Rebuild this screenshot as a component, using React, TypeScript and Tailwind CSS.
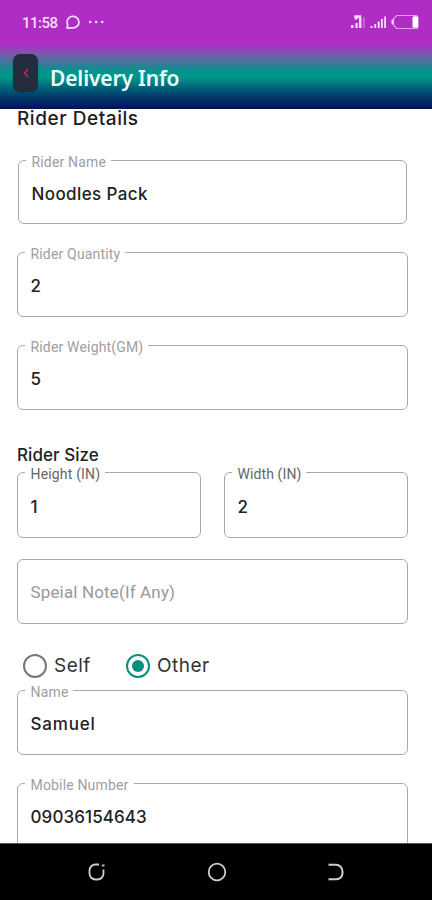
import React from 'react'

type FieldProps = {
  label?: string
  value?: string
  placeholder?: string
  className?: string
  labelClass?: string
  valueClass?: string
}

function Field({ label, value, placeholder, className = '', labelClass = 'tracking-[0.17px] text-[#a0a0a0]', valueClass = '' }: FieldProps) {
  return (
    <div className={`relative flex items-center rounded-[6px] border border-[#a9a9a9] ${className}`}>
      {label && (
        <span
          className={`absolute -top-[7px] left-[7px] whitespace-nowrap bg-white pl-[5.5px] pr-[5px] font-[Roboto,sans-serif] text-sm leading-4 ${labelClass}`}
        >
          {label}
        </span>
      )}
      {value && (
        <span className={`whitespace-nowrap pl-[12.5px] pt-[3px] text-[17px] leading-6 text-[#222] ${valueClass || 'font-medium'}`}>{value}</span>
      )}
      {placeholder && (
        <span className="whitespace-nowrap pl-[12.5px] pt-px font-[Roboto,sans-serif] text-[17px] leading-6 tracking-[0.15px] text-[#999]">
          {placeholder}
        </span>
      )}
    </div>
  )
}

function StatusBar() {
  return (
    <div className="flex h-11 items-center justify-between pl-[22px] pr-[13px] text-[#f6dcfa]">
      <div className="flex items-center">
        <span className="mt-0.5 w-[43px] font-[Roboto,sans-serif] text-[15px] font-medium leading-5 tracking-[-0.5px]">11:58</span>
        <svg width="15" height="14" viewBox="0 0 15 14" fill="none" stroke="currentColor" strokeWidth="1.7">
          <path d="M2 12.900H8a5.900 5.800 0 1 0-5.300-3.300Z" />
        </svg>
        <svg className="ml-2" width="18" height="4" viewBox="0 0 18 4" fill="currentColor">
          <circle cx="2.200" cy="2" r="1.300" />
          <circle cx="8.200" cy="2" r="1.300" />
          <circle cx="14.200" cy="2" r="1.300" />
        </svg>
      </div>
      <svg width="69" height="16" viewBox="0 0 69 16" fill="currentColor">
        <path d="M1 11h2.500v3H1zM5.500 9h2.200v5H5.500zM9 4h2.500v10H9z" />
        <path d="M4.200 4V1.300h7V4H7.500v1.500H4.700V4z" />
        <path d="M13.200 3h1.500v11h-1.500z" opacity=".4" />
        <path d="M20.500 12h2v2h-2zM24.300 10h1.800v4h-1.800zM27.700 7.500h2v6.500h-2zM31 5h1.800v9H31zM34.200 2.500h1.800v11.500h-1.800z" />
        <path d="M46.500 1.500H66a2 2 0 0 1 2 2v9a2 2 0 0 1-2 2H46.500l-3-3.500V5z" fill="none" stroke="currentColor" strokeWidth="1.200" opacity=".65" />
        <rect x="41.500" y="5.500" width="2.200" height="5" rx="1" />
        <rect x="62.500" y="2.200" width="5.500" height="11.500" rx="1.500" fill="#fff" />
      </svg>
    </div>
  )
}

function Radio({ label, checked }: { label: string; checked?: boolean }) {
  return (
    <div className="flex items-center gap-[7px]">
      <span
        className={`flex h-6 w-6 items-center justify-center rounded-full border-2 ${checked ? 'border-[#079080]' : 'border-[#777]'}`}
      >
        {checked && <span className="h-3 w-3 rounded-full bg-[#079080]" />}
      </span>
      <span className="pt-px text-[19px] leading-6 tracking-[0.5px] text-[#333]">{label}</span>
    </div>
  )
}

export default function App() {
  return (
    <div className="flex h-[900px] w-[432px] flex-col overflow-hidden bg-white font-[Inter,sans-serif]">
      <header className="h-[109px] shrink-0 bg-[linear-gradient(180deg,#af2dc4_0px,#af2dc4_45px,#785bad_54px,#00958a_72px,#00958a_78px,#006b7c_86px,#023b6b_97px,#04185d_107px,#04104c_109px)]">
        <StatusBar />
        <div className="flex pl-[13px] pt-[10px]">
          <button className="flex h-[38px] w-[25px] items-center justify-center rounded-[7px] bg-[#252c3d] shadow-sm">
            <svg width="6" height="10" viewBox="0 0 6 10" fill="none" stroke="#d5205b" strokeWidth="1.5">
              <path d="M5 1.200 1.500 5 5 8.800" />
            </svg>
          </button>
          <h1 className="ml-3 mt-[9px] font-['Noto_Sans',sans-serif] text-[21px] font-semibold leading-[30px] tracking-[-0.15px] text-[#e9fffc]">
            Delivery Info
          </h1>
        </div>
      </header>

      <main className="min-h-0 flex-1 pl-[17px] pr-6">
        <h2 className="mb-8 h-[19px] whitespace-nowrap text-[19px] font-medium leading-[19px] tracking-[0.55px] text-[#202020]">
          Rider Details
        </h2>
        <Field label="Rider Name" value="Noodles Pack" className="mb-7 ml-px mr-px h-16" valueClass="font-medium tracking-[0.4px]" />
        <Field label="Rider Quantity" value="2" className="mb-7 h-[65px]" />
        <Field label="Rider Weight(GM)" value="5" className="h-[65px]" />

        <h3 className="mb-[7px] mt-[35px] h-5 whitespace-nowrap text-[17px] font-medium leading-5 tracking-[0.05px] text-[#222]">
          Rider Size
        </h3>
        <div className="mb-[21px] flex justify-between">
          <Field label="Height (IN)" value="1" className="h-[66px] w-[184px]" labelClass="tracking-[0.17px] text-[#666]" />
          <Field label="Width (IN)" value="2" className="h-[66px] w-[184px]" labelClass="tracking-[0.1px] text-[#666]" />
        </div>
        <Field placeholder="Speial Note(If Any)" className="h-[65px]" />

        <div className="mb-[12px] mt-[29px] flex gap-[35px] pl-1.5">
          <Radio label="Self" />
          <Radio label="Other" checked />
        </div>
        <Field label="Name" value="Samuel" className="mb-7 h-[65px]" valueClass="font-medium tracking-[0.8px]" />
        <Field label="Mobile Number" value="09036154643" className="h-[65px]" valueClass="font-medium tracking-[0.1px]" />
      </main>

      <nav className="relative z-10 flex h-[57px] shrink-0 items-center justify-between border-t border-[#555] bg-black pl-[87px] pr-[86px] text-[#cfcfcf]">
        <svg width="20" height="20" viewBox="0 0 20 20" fill="none" stroke="currentColor" strokeWidth="1.800">
          <path d="M12 2.500H8.500a6 6 0 0 0-6 6v3a6 6 0 0 0 6 6h2a6 6 0 0 0 6-6V7.500" />
          <path d="M15 3.500h2.500" />
        </svg>
        <svg width="20" height="20" viewBox="0 0 20 20" fill="none" stroke="currentColor" strokeWidth="1.800">
          <circle cx="10" cy="10" r="8.300" />
        </svg>
        <svg width="20" height="20" viewBox="0 0 20 20" fill="none" stroke="currentColor" strokeWidth="2">
          <path d="M2.500 2.800h7.500a6.500 6.500 0 0 1 6.500 6.500v2a6 6 0 0 1-6 6h-8" />
        </svg>
      </nav>
    </div>
  )
}
